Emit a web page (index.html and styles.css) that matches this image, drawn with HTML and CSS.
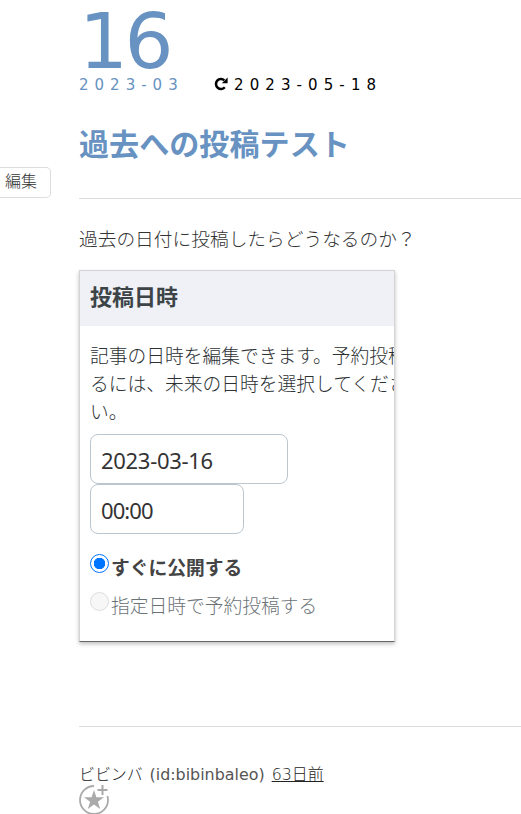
FILE: index.html
```html
<!DOCTYPE html>
<html lang="ja">
<head>
<meta charset="utf-8">
<title>過去への投稿テスト</title>
<link rel="stylesheet" href="styles.css">
</head>
<body>
<div class="page">
  <aside class="side"><a class="edit">編集</a></aside>
  <article class="entry">
    <header class="entry-header">
      <div class="day">16</div>
      <div class="dates">
        <time class="month">2023-03</time>
        <svg class="refresh" viewBox="0 0 14 14"><path d="M10.800 10.200A5 5 0 1 1 10.300 3.200" fill="none" stroke="#000" stroke-width="2.500"/><path d="M13.600 .6v5.600H7.800z"/></svg>
        <time class="updated">2023-05-18</time>
      </div>
      <h1 class="title">過去への投稿テスト</h1>
    </header>
    <p class="lead">過去の日付に投稿したらどうなるのか？</p>
    <section class="panel">
      <h2 class="panel-title">投稿日時</h2>
      <div class="panel-body">
        <p class="desc">記事の日時を編集できます。予約投稿<br>るには、未来の日時を選択してくださ<br>い。</p>
        <div class="field date"><span>2023-03-16</span></div>
        <div class="field time"><span>00:00</span></div>
        <div class="option selected"><i class="radio"></i><span>すぐに公開する</span></div>
        <div class="option disabled"><i class="radio"></i><span>指定日時で予約投稿する</span></div>
      </div>
    </section>
    <footer class="entry-footer">
      <div class="author"><span class="kana">ビビンバ</span> <span class="uid">(id:bibinbaleo)</span> <a class="ago">63日前</a></div>
      <svg class="star" viewBox="0 0 30 30"><path d="M15 1A14 14 0 1 0 29 15Q29 13 28.400 11" fill="none" stroke="#aaa" stroke-width="1.800"/><path d="M15 5l2.400 7.200H25l-6.100 4.500 2.300 7.300-6.200-4.500-6.200 4.500 2.300-7.300L5 12.200h7.600z" fill="#aaa"/><path d="M23.500 0v10M18.500 5h10" stroke="#aaa" stroke-width="2"/></svg>
    </footer>
  </article>
</div>
</body>
</html>
```
FILE: styles.css
```css
* { box-sizing: border-box; }
body {
  margin: 0;
  background: #fff;
  color: #444;
  font-family: "DejaVu Sans", "Noto Sans CJK JP", sans-serif;
  overflow: hidden;
}
.page { display: flex; height: 814px; overflow: hidden; }
.side { width: 79px; flex: none; padding-top: 167px; }
.edit {
  display: block;
  width: 51px;
  height: 31px;
  padding-left: 5px;
  border: 1px solid #ddd;
  border-left: 0;
  border-radius: 0 5px 5px 0;
  font: 300 16px/25px "Noto Sans CJK JP", sans-serif;
  color: #333;
}
.entry { flex: 1; min-width: 0; }
.entry-header { height: 199px; border-bottom: 1px solid #ddd; }
.day {
  height: 75px;
  font-size: 77px;
  line-height: 83px;
  letter-spacing: -3.5px;
  color: #6792c1;
}
.dates { display: flex; align-items: center; height: 20px; font-size: 15px; line-height: 20px; }
.month { width: 135px; color: #6792c1; letter-spacing: 6px; }
.refresh { width: 14px; height: 14px; margin: -2px 6px 0 0; }
.updated { color: #000; letter-spacing: 6.1px; }
.title {
  margin: 24px 0 0;
  font: bold 30.1px/46px "Noto Sans CJK JP", sans-serif;
  color: #6792c1;
}
.lead { margin: 25px 0 0; height: 46px; color: #333; font: 300 18.72px/28px "Noto Sans CJK JP", sans-serif; white-space: nowrap; }
.panel {
  width: 316px;
  height: 372px;
  overflow: hidden;
  border: 1px solid #d4d4d4;
  border-bottom-color: #666;
  box-shadow: 0 2px 4px rgba(0, 0, 0, .25);
}
.panel-title {
  margin: 0;
  height: 55px;
  padding-left: 10px;
  background: #eff1f6;
  color: #3d4448;
  font: bold 22px/48px "Noto Sans CJK JP", sans-serif;
}
.panel-body { padding: 15px 0 0 10px; font-family: "Noto Sans CJK JP", sans-serif; }
.desc { margin: 0 0 9px; color: #2c3134; font-size: 18.75px; line-height: 28px; font-weight: 300; white-space: nowrap; }
.field {
  height: 50px;
  padding-left: 10px;
  border: 1px solid #bcc6ce;
  border-radius: 8px;
  font: 22px/51px "Noto Sans", sans-serif;
  letter-spacing: -.3px;
  color: #333;
}
.date { width: 198px; }
.time { width: 154px; letter-spacing: -.9px; }
.option { display: flex; height: 38px; font-size: 18.75px; line-height: 37px; }
.selected { margin-top: 14px; font-weight: bold; }
.disabled { color: #6b7276; font-weight: 300; }
.radio { width: 19px; height: 19px; margin: 6px 2px 0 0; border-radius: 50%; }
.selected .radio { border: 1.5px solid #0075ff; background: radial-gradient(circle, #0075ff 5.5px, #fff 6px); }
.disabled .radio { border: 1.5px solid #ddd; background: #f7f7f7; }
.entry-footer { margin-top: 84px; padding-top: 36px; border-top: 1px solid #ddd; }
.author { display: flex; gap: 7px; height: 22px; font-size: 15.9px; line-height: 24px; white-space: nowrap; }
.uid { color: #555; }
.kana, .ago { font-weight: 300; color: #222; }
.ago { text-decoration: underline; }
.star { display: block; width: 30px; height: 30px; }
```
